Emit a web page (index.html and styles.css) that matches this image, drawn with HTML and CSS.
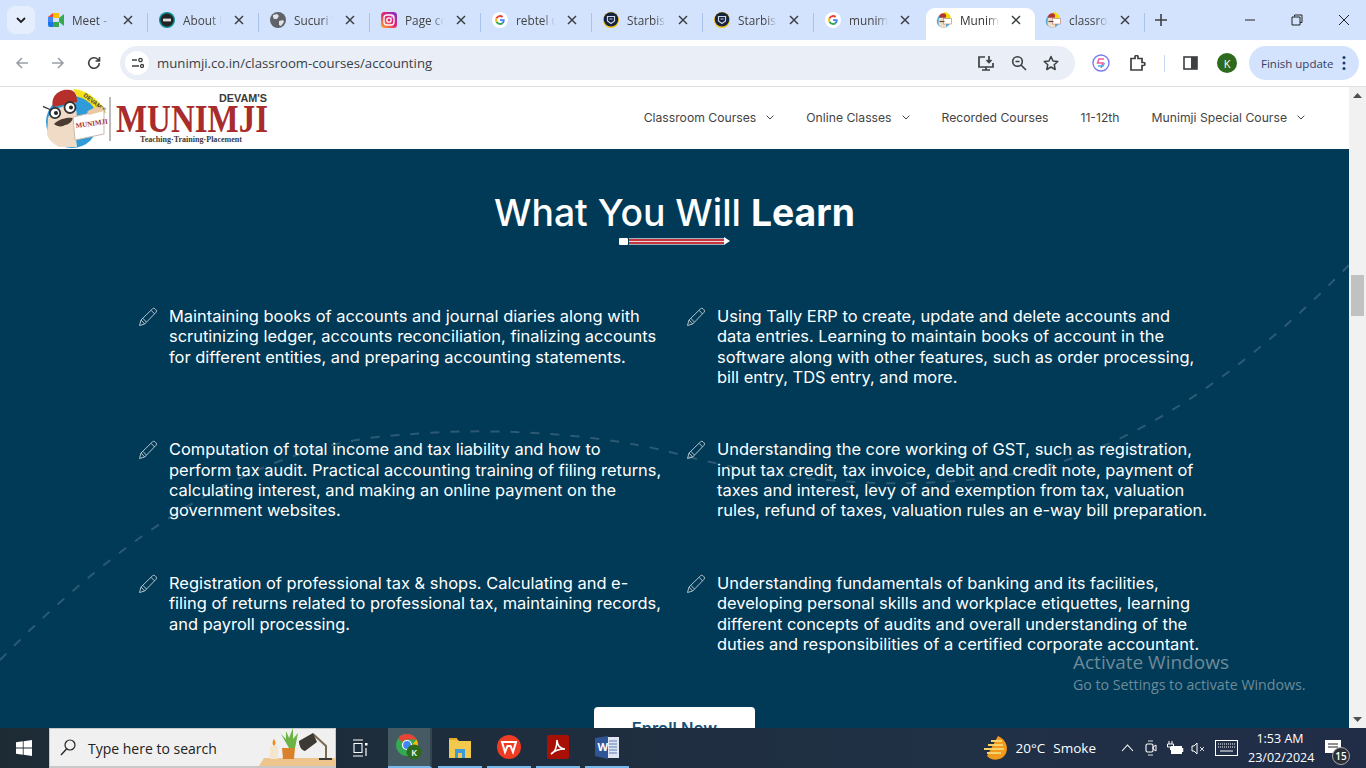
FILE: index.html
```html
<!DOCTYPE html>
<html lang="en">
<head>
<meta charset="utf-8">
<title>Munimji</title>
<link rel="stylesheet" href="styles.css">
</head>
<body>
<svg class="defs" width="0" height="0" aria-hidden="true">
  <defs>
    <linearGradient id="ig" x1="0" y1="1" x2="1" y2="0"><stop offset="0" stop-color="#fdb32a"/><stop offset=".5" stop-color="#e8256f"/><stop offset="1" stop-color="#7b2fd6"/></linearGradient>
    <symbol id="f-meet" viewBox="0 0 16 16"><path d="M0 5 5 1h6v5H5v4H0z" fill="#ea4335"/><path d="M0 5h5v5H0z" fill="#4285f4"/><path d="M0 10h5v5H2a2 2 0 0 1-2-2z" fill="#1a73e8"/><path d="M5 10h6v5H5z" fill="#34a853"/><path d="M5 1h6v5H5z" fill="#fbbc04"/><path d="M11 6 16 2v12l-5-4z" fill="#34a853"/></symbol>
    <symbol id="f-ms" viewBox="0 0 16 16"><circle cx="8" cy="8" r="8" fill="#0d8a8f"/><circle cx="8" cy="8" r="6.500" fill="#222"/><rect x="4" y="6.600" width="8" height="2.800" fill="#ddd"/></symbol>
    <symbol id="f-globe" viewBox="0 0 16 16"><circle cx="8" cy="8" r="8" fill="#5f6368"/><path d="M3 3 7 2 9 4 7 7 4 7 3 5zM9 9l4-1 1 2-3 4-2-1z" fill="#dfe3e8"/></symbol>
    <symbol id="f-ig" viewBox="0 0 16 16"><rect width="16" height="16" rx="3.500" fill="url(#ig)"/><rect x="3" y="3" width="10" height="10" rx="3" fill="none" stroke="#fff" stroke-width="1.300"/><circle cx="8" cy="8" r="2.200" fill="none" stroke="#fff" stroke-width="1.300"/><circle cx="11" cy="5" r=".8" fill="#fff"/></symbol>
    <symbol id="f-g" viewBox="0 0 16 16"><circle cx="8" cy="8" r="8" fill="#fff"/><path d="M12.700 8.200c0-.4 0-.7-.1-1H8v1.900h2.700a2.300 2.300 0 0 1-1 1.500l1.500 1.200c.9-.9 1.500-2.100 1.500-3.600z" fill="#4285f4"/><path d="M8 13c1.300 0 2.400-.4 3.200-1.200l-1.500-1.200c-.4.3-1 .5-1.700.5-1.300 0-2.400-.9-2.800-2L3.600 10.300A5 5 0 0 0 8 13z" fill="#34a853"/><path d="M5.200 9.100a3 3 0 0 1 0-2L3.600 5.800a5 5 0 0 0 0 4.500z" fill="#fbbc05"/><path d="M8 5c.7 0 1.400.3 1.900.7l1.400-1.400A5 5 0 0 0 3.600 5.800l1.600 1.300C5.600 5.900 6.700 5 8 5z" fill="#ea4335"/></symbol>
    <symbol id="f-star" viewBox="0 0 16 16"><circle cx="8" cy="8" r="8" fill="#f2c012"/><circle cx="8" cy="7.400" r="7.200" fill="#14233f"/><path d="M4.500 4.500h7V9L8 11.500 4.500 9z" fill="none" stroke="#cfd6e2" stroke-width="1.200"/><path d="M6.500 7h3" stroke="#cfd6e2"/></symbol>
    <symbol id="f-mun" viewBox="0 0 16 16"><circle cx="7.500" cy="9" r="6.800" fill="#58a9dc"/><path d="M8 0a8 8 0 0 1 7 6L9 7z" fill="#f5d90a"/><path d="M3 5C3 1 9 0 10 3v2.500H3z" fill="#b8322e"/><path d="M3 6h7v9.500H6C4 15 2.500 13 2.500 11z" fill="#f1dcc4"/><rect x="7.500" y="6.500" width="8" height="5.500" fill="#fff" stroke="#c27a76" stroke-width=".6"/><path d="M3.500 9.500h5" stroke="#5a4a40" stroke-width="1.200"/></symbol>
    <symbol id="x" viewBox="0 0 10 10"><path d="M1 1l8 8M9 1 1 9" fill="none" stroke="#3c4043" stroke-width="1.500"/></symbol>
    <symbol id="pen" viewBox="0 0 20 20"><path d="M1.500 18.500 3 13 14.500 1.800a1.800 1.800 0 0 1 2.500 0l1 1a1.800 1.800 0 0 1 0 2.500L6.700 17zM3 13l3.700 4M13 3.300l3.700 3.700M4.800 11.300l3.600 3.700" fill="none" stroke="#b4c2ca" stroke-width="1" stroke-linejoin="round"/></symbol>
    <symbol id="chev" viewBox="0 0 8 5"><path d="M.7.7 4 4 7.300.7" fill="none" stroke="#444" stroke-width="1"/></symbol>
  </defs>
</svg>

<header class="tabstrip">
  <button class="tab-menu"><svg width="10" height="7" viewBox="0 0 10 7"><path d="M1 1l4 4 4-4" fill="none" stroke="#1f1f1f" stroke-width="1.800"/></svg></button>
  <div class="tab"><svg class="fav"><use href="#f-meet"/></svg><span class="tab-label">Meet - Google</span><svg class="tab-x"><use href="#x"/></svg></div>
  <div class="tab"><svg class="fav"><use href="#f-ms"/></svg><span class="tab-label">About Us</span><svg class="tab-x"><use href="#x"/></svg></div>
  <div class="tab"><svg class="fav"><use href="#f-globe"/></svg><span class="tab-label">Sucuri Web</span><svg class="tab-x"><use href="#x"/></svg></div>
  <div class="tab"><svg class="fav"><use href="#f-ig"/></svg><span class="tab-label">Page could</span><svg class="tab-x"><use href="#x"/></svg></div>
  <div class="tab"><svg class="fav"><use href="#f-g"/></svg><span class="tab-label">rebtel uses</span><svg class="tab-x"><use href="#x"/></svg></div>
  <div class="tab"><svg class="fav"><use href="#f-star"/></svg><span class="tab-label">Starbis -</span><svg class="tab-x"><use href="#x"/></svg></div>
  <div class="tab"><svg class="fav"><use href="#f-star"/></svg><span class="tab-label">Starbis -</span><svg class="tab-x"><use href="#x"/></svg></div>
  <div class="tab tab-before-active"><svg class="fav"><use href="#f-g"/></svg><span class="tab-label">munimji</span><svg class="tab-x"><use href="#x"/></svg></div>
  <div class="tab tab-active"><svg class="fav"><use href="#f-mun"/></svg><span class="tab-label">Munimji</span><svg class="tab-x"><use href="#x"/></svg></div>
  <div class="tab"><svg class="fav"><use href="#f-mun"/></svg><span class="tab-label">classroom</span><svg class="tab-x"><use href="#x"/></svg></div>
  <svg class="new-tab" width="12" height="12" viewBox="0 0 12 12"><path d="M6 0v12M0 6h12" stroke="#3c4043" stroke-width="1.600"/></svg>
  <div class="win-controls">
    <svg width="12" height="12" viewBox="0 0 12 12"><path d="M1 6h10" stroke="#222" stroke-width="1"/></svg>
    <svg width="12" height="12" viewBox="0 0 12 12"><path d="M3.500 2.500V1h7.500v7.500H9M1 3h8v8H1z" fill="none" stroke="#222" stroke-width="1"/></svg>
    <svg width="12" height="12" viewBox="0 0 12 12"><path d="M1 1l10 10M11 1 1 11" stroke="#222" stroke-width="1"/></svg>
  </div>
</header>

<nav class="toolbar">
  <svg class="tool" width="14" height="14" viewBox="0 0 14 14"><path d="M13 7H2M7 2 2 7l5 5" fill="none" stroke="#9aa0a6" stroke-width="1.600"/></svg>
  <svg class="tool" width="14" height="14" viewBox="0 0 14 14"><path d="M1 7h11M7 2l5 5-5 5" fill="none" stroke="#9aa0a6" stroke-width="1.600"/></svg>
  <svg class="tool" width="14" height="14" viewBox="0 0 14 14"><path d="M12.300 7A5.300 5.300 0 1 1 10.700 3.200L12.500 5M12.500 1v4h-4" fill="none" stroke="#3c4043" stroke-width="1.600"/></svg>
  <div class="omnibox">
    <span class="tune"><svg width="13" height="12" viewBox="0 0 13 12"><path d="M1 3h5M1 9h7" stroke="#3c4043" stroke-width="1.400"/><circle cx="9.500" cy="3" r="1.700" fill="none" stroke="#3c4043" stroke-width="1.300"/><circle cx="11" cy="9" r="1.500" fill="none" stroke="#3c4043" stroke-width="1.300"/></svg></span>
    <span class="url">munimji.co.in/classroom-courses/accounting</span>
    <div class="omni-icons">
      <svg width="18" height="17" viewBox="0 0 18 17"><path d="M8 2H2v10h14V8M5 15h8M9 12v3M12 1v6M9.500 5 12 7.500 14.500 5" fill="none" stroke="#3c4043" stroke-width="1.700"/></svg>
      <svg width="16" height="16" viewBox="0 0 16 16"><circle cx="6.500" cy="6.500" r="4.800" fill="none" stroke="#3c4043" stroke-width="1.600"/><path d="M10 10l5 5M4.500 6.500h4" stroke="#3c4043" stroke-width="1.600"/></svg>
      <svg width="16" height="16" viewBox="0 0 16 16"><path d="m8 1.500 2 4.500 4.800.5-3.600 3.200 1 4.800L8 12l-4.200 2.500 1-4.800L1.200 6.500 6 6z" fill="none" stroke="#3c4043" stroke-width="1.500" stroke-linejoin="round"/></svg>
    </div>
  </div>
  <svg class="ext-swirl" width="18" height="18" viewBox="0 0 18 18"><circle cx="9" cy="9" r="8" fill="#fff" stroke="#7b7bf0" stroke-width="1.400"/><path d="M12 5H7L5.500 9H11L9 14" fill="none" stroke="#f0609a" stroke-width="1.500"/><path d="M6 12h5l1.500-3" fill="none" stroke="#39b6e8" stroke-width="1.300"/></svg>
  <svg class="ext-puzzle" width="17" height="17" viewBox="0 0 17 17"><path d="M2 3.500h4V2a1.500 1.500 0 0 1 3 0v1.500h4v4h1.500a1.500 1.500 0 0 1 0 3H13v4.500H2z" fill="none" stroke="#3c4043" stroke-width="1.700"/></svg>
  <span class="tool-div"></span>
  <svg class="side-panel" width="15" height="14" viewBox="0 0 15 14"><rect x="1" y="1" width="13" height="12" fill="none" stroke="#3c4043" stroke-width="1.600"/><rect x="8" y="1" width="6" height="12" fill="#3c4043"/></svg>
  <span class="avatar">K</span>
  <div class="update-pill"><span>Finish update</span><svg width="4" height="16" viewBox="0 0 4 16"><circle cx="2" cy="2.500" r="1.500" fill="#1f3b66"/><circle cx="2" cy="8" r="1.500" fill="#1f3b66"/><circle cx="2" cy="13.500" r="1.500" fill="#1f3b66"/></svg></div>
</nav>

<div class="viewport">
  <main class="page">
    <div class="site-nav">
      <a class="logo" href="#">
        <svg width="228" height="62" viewBox="0 0 228 62">
          <path d="M30 2c14 1 28 12 33 24L46 30z" fill="#f6e21a"/>
          <text x="40" y="9" class="logo-tiny" transform="rotate(38 40 9)">DEVAM'S</text>
          <circle cx="29" cy="35" r="26" fill="#2f9bd8"/>
          <path d="M5 31l3-7 24-9 2 14-2 14 2 17H16C10 57 6 53 4 48z" fill="#f0dcc6"/>
          <path d="M10 20C7 8 18 1 27 3c6 1 7 6 7 12z" fill="#b5302b"/>
          <circle cx="12" cy="26" r="5.200" fill="#fff" stroke="#333" stroke-width="1.800"/>
          <circle cx="27" cy="20.500" r="5.500" fill="#fff" stroke="#333" stroke-width="1.800"/>
          <circle cx="13" cy="26" r="2" fill="#222"/><circle cx="28" cy="20.500" r="2" fill="#222"/>
          <path d="M11 37c5-5 13-7 19-6-1 4-5 7-8 7-2 2-8 2-11-1z" fill="#4a3b32"/>
          <path d="M-1 19l9 4" stroke="#333" stroke-width="1.300"/>
          <path d="M30 30l31-7 0 24-29 6z" fill="#fff" stroke="#c9b9b0"/>
          <text x="33" y="41" class="logo-card" transform="rotate(-8 33 41)">MUNIMJI</text>
          <path d="M44 25c3-3 11-6 15-4l2 3-15 4z" fill="#eac8a6"/>
          <path d="M67 10v44" stroke="#777" stroke-width="1"/>
          <text x="176" y="15" class="logo-devam" textLength="48" lengthAdjust="spacingAndGlyphs">DEVAM'S</text>
          <text x="73" y="45" class="logo-word" textLength="152" lengthAdjust="spacingAndGlyphs">MUNIMJI</text>
          <text x="97" y="55" class="logo-tag" textLength="102" lengthAdjust="spacingAndGlyphs">Teaching·Training·Placement</text>
        </svg>
      </a>
      <ul class="menu">
        <li>Classroom Courses<svg class="chev"><use href="#chev"/></svg></li>
        <li>Online Classes<svg class="chev"><use href="#chev"/></svg></li>
        <li>Recorded Courses</li>
        <li>11-12th</li>
        <li>Munimji Special Course<svg class="chev"><use href="#chev"/></svg></li>
      </ul>
    </div>

    <section class="learn">
      <svg class="wave" width="1349" height="641" viewBox="0 0 1349 641" aria-hidden="true">
        <path d="M0 573C110 460 250 355 402 348 480 340 590 345 670 365 780 395 900 405 1007 388 1130 368 1250 280 1349 178" fill="none" stroke="#2c5a73" stroke-width="2" stroke-dasharray="9 11"/>
      </svg>
      <h2 class="learn-title">What You Will <strong>Learn</strong></h2>
      <div class="pencil">
        <span class="pencil-eraser"></span>
        <span class="pencil-body"></span>
        <span class="pencil-tip"></span>
      </div>
      <div class="learn-grid">
        <div class="item"><svg class="pen"><use href="#pen"/></svg><p>Maintaining books of accounts and journal diaries along with scrutinizing ledger, accounts reconciliation, finalizing accounts for different entities, and preparing accounting statements.</p></div>
        <div class="item"><svg class="pen"><use href="#pen"/></svg><p>Using Tally ERP to create, update and delete accounts and<br>data entries. Learning to maintain books of account in the software along with other features, such as order processing, bill entry, TDS entry, and more.</p></div>
        <div class="item"><svg class="pen"><use href="#pen"/></svg><p>Computation of total income and tax liability and how to perform tax audit. Practical accounting training of filing returns, calculating interest, and making an online payment on the government websites.</p></div>
        <div class="item"><svg class="pen"><use href="#pen"/></svg><p>Understanding the core working of GST, such as registration, input tax credit, tax invoice, debit and credit note, payment of taxes and interest, levy of and exemption from tax, valuation rules, refund of taxes, valuation rules an e-way bill preparation.</p></div>
        <div class="item"><svg class="pen"><use href="#pen"/></svg><p>Registration of professional tax &amp; shops. Calculating and e-filing of returns related to professional tax, maintaining records, and payroll processing.</p></div>
        <div class="item"><svg class="pen"><use href="#pen"/></svg><p>Understanding fundamentals of banking and its facilities, developing personal skills and workplace etiquettes, learning different concepts of audits and overall understanding of the duties and responsibilities of a certified corporate accountant.</p></div>
      </div>
      <a class="enroll" href="#">Enroll Now</a>
    </section>
  </main>
  <aside class="scrollbar">
    <svg width="9" height="5" viewBox="0 0 9 5"><path d="M4.500 0 9 5H0z" fill="#505050"/></svg>
    <span class="thumb"></span>
    <svg width="9" height="5" viewBox="0 0 9 5"><path d="M0 0h9L4.500 5z" fill="#505050"/></svg>
  </aside>
  <div class="activate">
    <div class="activate-title">Activate Windows</div>
    <div class="activate-sub">Go to Settings to activate Windows.</div>
  </div>
</div>

<footer class="taskbar">
  <svg class="start" width="16" height="16" viewBox="0 0 16 16"><path d="M0 2.300 6.800 1.300V7.600H0zM7.600 1.200 16 0V7.600H7.600zM0 8.400H6.800V14.700L0 13.700zM7.600 8.400H16V16L7.600 14.800z" fill="#fff"/></svg>
  <div class="search">
    <svg width="16" height="17" viewBox="0 0 16 17"><circle cx="10" cy="6" r="5" fill="none" stroke="#222" stroke-width="1.200"/><path d="M6.500 10 1 16" stroke="#222" stroke-width="1.300"/></svg>
    <span>Type here to search</span>
    <svg class="search-art" width="76" height="38" viewBox="0 0 76 38">
      <path d="M0 38l5-8h71v8z" fill="#eec58c"/>
      <rect x="11" y="18" width="8" height="13" rx="1" fill="#f3e6cf"/><path d="M15 11c2 3 2 5 0 7-2-2-2-4 0-7z" fill="#f08a1d"/>
      <path d="M23 20h13l-1 11H24z" fill="#d9822b"/>
      <path d="M30 20 22 6l5 5 0-8 3 7 4-10 0 11 5-6-3 15z" fill="#6ab344"/>
      <path d="M54 6l13 12v12" fill="none" stroke="#7a6a4e" stroke-width="2"/>
      <path d="M60 30h13v2H60z" fill="#3d3a34"/>
      <path d="M40 13l14-8 4 9-12 9c-4-1-6-5-6-10z" fill="#3d3a34"/>
    </svg>
  </div>
  <svg class="taskview" width="16" height="18" viewBox="0 0 16 18"><path d="M1 1h10M1 17h10M2 4.500h8v9H2z" fill="none" stroke="#fff" stroke-width="1.100"/><rect x="13" y="4" width="2.500" height="2.500" fill="#fff"/><path d="M14 9v8" stroke="#fff" stroke-width="1.200"/></svg>
  <div class="task-cell task-chrome">
    <svg width="26" height="26" viewBox="0 0 26 26"><circle cx="11" cy="11" r="11" fill="#34a853"/><path d="M11 0a11 11 0 0 1 9.500 5.500H11A5.500 5.500 0 0 0 6 8.500L2.300 4A11 11 0 0 1 11 0z" fill="#ea4335"/><path d="M20.500 5.500A11 11 0 0 1 11 22l4-7a5 5 0 0 0 1-4z" fill="#fbbc05"/><circle cx="11" cy="11" r="4.500" fill="#4285f4" stroke="#fff" stroke-width="1.200"/><circle cx="18" cy="18" r="7.500" fill="#2d6a1e"/><text x="18" y="21.500" class="chrome-k">K</text></svg>
  </div>
  <div class="task-cell">
    <svg width="22" height="21" viewBox="0 0 22 21"><path d="M0 2h8l2 2h12v17H0z" fill="#f2c94c"/><path d="M0 1h8v2H0z" fill="#e3a92f"/><path d="M6 12h10v9h-3v-5H9v5H6z" fill="#3c9ad8"/></svg>
  </div>
  <div class="task-cell">
    <svg width="24" height="24" viewBox="0 0 24 24"><circle cx="12" cy="12" r="12" fill="#ed3c24"/><path d="M5 7h14l-3 10-2.500-6h-3L8 17z" fill="none" stroke="#fff" stroke-width="2"/></svg>
  </div>
  <div class="task-cell">
    <svg width="22" height="24" viewBox="0 0 22 24"><rect width="22" height="24" rx="2" fill="#a80f05"/><path d="M4 19c4-2 6-8 6-14 0 5 3 9 8 9-5 0-10 1-14 5z" fill="none" stroke="#fff" stroke-width="1.600"/></svg>
  </div>
  <div class="task-cell">
    <svg width="24" height="24" viewBox="0 0 24 24"><path d="M9 2h15v21H9z" fill="#dfe6f2"/><path d="M14 6h8M14 9h8M14 12h8M14 15h8M14 18h8" stroke="#5b7fb5"/><path d="M0 3 13 1v23L0 21z" fill="#2f5597"/><text x="2.500" y="16" class="word-w">W</text></svg>
  </div>
  <div class="tray">
    <svg class="weather" width="26" height="26" viewBox="0 0 26 26"><path d="M15 1c9 4 11 13 7 19-4 6-14 6-18 1z" fill="#f19a1e"/><path d="M8 6h11M5 10h15M1 14h20M4 18h14" stroke="#f6d26b" stroke-width="2"/></svg>
    <span class="temp">20°C</span><span class="cond">Smoke</span>
    <svg class="tray-chev" width="13" height="8" viewBox="0 0 13 8"><path d="M1 7l5.500-6L12 7" fill="none" stroke="#fff" stroke-width="1.100"/></svg>
    <svg class="tray-meet" width="12" height="16" viewBox="0 0 12 16"><path d="M3 1h5M3 15h5" stroke="#ddd"/><rect x="1" y="4" width="7" height="8" rx="1.500" fill="none" stroke="#fff" stroke-width="1.100"/><path d="M8 7l3-2v6L8 9z" fill="none" stroke="#fff"/></svg>
    <svg class="tray-batt" width="18" height="15" viewBox="0 0 18 15"><path d="M3 0v3M6 0v3M1.500 3h6v3h-6zM4.500 6v3" stroke="#fff" fill="none"/><rect x="5" y="5" width="11" height="8" fill="#fff"/><path d="M16.500 7v4" stroke="#fff" stroke-width="1.500"/></svg>
    <svg class="tray-vol" width="14" height="15" viewBox="0 0 14 15"><path d="M1 5h2l3-3v11l-3-3H1z" fill="none" stroke="#fff"/><path d="M9 6l4 4M13 6l-4 4" stroke="#ddd"/></svg>
    <svg class="tray-kb" width="23" height="16" viewBox="0 0 23 16"><rect x=".5" y=".5" width="22" height="15" fill="none" stroke="#fff"/><path d="M3 4h17M3 7h17" stroke="#fff" stroke-dasharray="1 1"/><path d="M5 11h13" stroke="#fff"/></svg>
    <div class="clock"><div>1:53 AM</div><div>23/02/2024</div></div>
    <div class="notif">
      <svg width="16" height="16" viewBox="0 0 16 16"><path d="M0 0h16v13H0z" fill="#fff"/><path d="M3 4h10M3 7h10" stroke="#222"/></svg>
      <span class="notif-badge">15</span>
    </div>
  </div>
</footer>
</body>
</html>
```
FILE: styles.css
```css
* { box-sizing: border-box; }
html, body { margin: 0; padding: 0; height: 100%; overflow: hidden; }
body { width: 1366px; height: 768px; display: flex; flex-direction: column; font-family: "Open Sans", "Liberation Sans", sans-serif; background: #fff; }
.defs { position: absolute; }

/* Browser tab strip */
.tabstrip { height: 40px; flex: none; background: #d3e3fd; display: flex; align-items: flex-end; padding-left: 7px; }
.tab-menu { width: 28px; height: 28px; margin: 0 3px 6px 0; border: 0; padding: 0; border-radius: 8px; background: #e4eefd; display: flex; align-items: center; justify-content: center; }
.tab { width: 111px; height: 32px; flex: none; display: flex; align-items: center; padding-left: 10px; position: relative; font-size: 11.800px; color: #444; }
.tab::after { content: ""; position: absolute; right: 1px; top: 5px; height: 19px; width: 1px; background: #a7c3ec; }
.tab-before-active::after, .tab-active::after { display: none; }
.tab-active { width: 109px; background: #fff; border-radius: 9px 9px 0 0; color: #333; }
.fav { width: 16px; height: 16px; flex: none; margin-top: -8px; }
.tab-label { width: 39px; margin-left: 8px; white-space: nowrap; overflow: hidden; margin-top: -8px; -webkit-mask-image: linear-gradient(90deg, #000 70%, transparent); mask-image: linear-gradient(90deg, #000 70%, transparent); }
.tab-x { width: 10px; height: 10px; margin-left: 12px; margin-top: -8px; flex: none; }
.new-tab { margin: 0 0 14px 9px; flex: none; }
.win-controls { display: flex; margin: 0 0 14px 77px; gap: 35px; }

/* Browser toolbar */
.toolbar { height: 47px; flex: none; background: #fff; border-bottom: 1px solid #dfe1e5; display: flex; align-items: center; padding: 0 7px 0 15px; }
.tool { flex: none; margin-right: 22px; }
.omnibox { width: 955px; height: 34px; margin-left: -3px; border-radius: 17px; background: #e9eef7; display: flex; align-items: center; padding: 0 16px 0 5px; }
.tune { width: 24px; height: 24px; border-radius: 50%; background: #fff; display: flex; align-items: center; justify-content: center; flex: none; }
.url { margin-left: 8px; font-family: "Open Sans", sans-serif; font-size: 13.200px; color: #3a3f45; white-space: nowrap; }
.omni-icons { margin-left: auto; display: flex; align-items: center; gap: 16px; }
.ext-swirl { margin-left: 17px; flex: none; }
.ext-puzzle { margin-left: 19px; flex: none; }
.tool-div { width: 1px; height: 17px; background: #c7d9f4; margin-left: 18px; flex: none; }
.side-panel { margin-left: 18px; flex: none; }
.avatar { width: 20px; height: 20px; margin-left: 19px; border-radius: 50%; background: #2d6a1e; color: #fff; font-size: 11px; display: flex; align-items: center; justify-content: center; flex: none; }
.update-pill { width: 110px; height: 34px; margin-left: 12px; border-radius: 17px; background: #d3e3fd; display: flex; align-items: center; justify-content: space-between; padding: 0 13px 0 12px; font-size: 11.500px; color: #33415c; flex: none; }

/* Page viewport */
.viewport { height: 641px; flex: none; display: flex; position: relative; overflow: hidden; }
.page { width: 1349px; flex: none; display: flex; flex-direction: column; font-family: Inter, "Liberation Sans", sans-serif; }
.site-nav { height: 62px; flex: none; background: #fff; display: flex; align-items: center; justify-content: space-between; padding: 0 44px 0 43px; }
.logo { display: block; height: 62px; }
.logo-tiny { font: 700 6px "Liberation Sans", sans-serif; fill: #444; }
.logo-card { font: 700 7px "Liberation Serif", serif; fill: #a82c2c; }
.logo-devam { font: 700 11px "Liberation Sans", sans-serif; fill: #3a3a3a; }
.logo-word { font: 700 41px "Liberation Serif", serif; fill: #a82c2c; }
.logo-tag { font: 700 7.500px "Liberation Serif", serif; fill: #3a3a3a; }
.menu { list-style: none; margin: 0 0 2px; padding: 0; display: flex; gap: 32px; font-size: 12.200px; color: #444; }
.menu li { display: flex; align-items: center; white-space: nowrap; }
.chev { width: 8px; height: 5px; margin-left: 10px; }

.learn { flex: 1; min-height: 0; background: #003a57; position: relative; display: flex; flex-direction: column; align-items: center; color: #fff; }
.wave { position: absolute; left: 0; top: -62px; }
.learn-title { position: relative; margin: 38px 0 0; font-size: 37.300px; line-height: 52px; font-weight: 500; }
.learn-title strong { font-weight: 700; }
.pencil { position: relative; height: 8px; margin-top: -2px; display: flex; align-items: center; }
.pencil-eraser { width: 9px; height: 7px; background: #fff; border-radius: 1px; }
.pencil-body { width: 95px; height: 7px; margin-left: 1px; background: linear-gradient(#9fb3bf 0 1px, #c8343b 1px 3px, #e9d7d8 3px 4px, #c8343b 4px 6px, #9fb3bf 6px); }
.pencil-tip { width: 0; height: 0; border-left: 6px solid #fff; border-top: 4px solid transparent; border-bottom: 4px solid transparent; }
.learn-grid { position: relative; align-self: flex-start; margin: 61px 0 0 138px; width: 1096px; display: grid; grid-template-columns: 548px 548px; row-gap: 52.300px; }
.item { display: flex; align-items: flex-start; }
.item p { width: 496px; margin: 0 0 0 11px; font-size: 16.450px; line-height: 20.300px; }
.pen { width: 20px; height: 20px; flex: none; margin-top: 1px; }
.enroll { position: relative; margin-top: 53px; width: 161px; height: 50px; flex: none; background: #fff; border-radius: 4px; color: #1a5276; font-weight: 600; font-size: 16.500px; text-align: center; line-height: 42px; text-decoration: none; }

/* Scrollbar */
.scrollbar { width: 17px; flex: none; background: #f1f1f1; display: flex; flex-direction: column; align-items: center; padding: 6px 0 6px; position: relative; }
.scrollbar svg:last-child { margin-top: auto; }
.thumb { position: absolute; left: 2px; top: 188px; width: 13px; height: 41px; background: #c1c1c1; }

/* Activation watermark */
.activate { position: absolute; left: 1073px; top: 565px; color: #6d8a99; pointer-events: none; }
.activate-title { font-size: 19px; line-height: 20px; }
.activate-sub { font-size: 14.200px; line-height: 26px; }

/* Windows taskbar */
.taskbar { height: 40px; flex: none; display: flex; align-items: center; background: linear-gradient(90deg, #1d2b35, #203045 70%, #212d47); color: #fff; padding-left: 16px; }
.start { flex: none; }
.search { width: 287px; height: 40px; margin-left: 17px; background: #f0f0f0; border: 1px solid #c8c8c8; border-width: 1px 1px 2px; display: flex; align-items: center; padding-left: 10px; color: #222; font-size: 14px; flex: none; position: relative; }
.search span { margin: 2px 0 0 12px; }
.search-art { position: absolute; right: 0; bottom: 0; }
.taskview { margin: 0 20px 0 16px; flex: none; }
.task-cell { width: 44px; height: 40px; margin-right: 5px; flex: none; display: flex; align-items: center; justify-content: center; border-bottom: 2px solid #76b9ed; }
.task-chrome { margin-right: 6px; background: #465a63; border-right: 2px solid #33454f; }
.chrome-k { font-size: 9px; font-weight: 600; fill: #fff; text-anchor: middle; }
.word-w { font-size: 11px; font-weight: 700; fill: #fff; }
.tray { margin-left: auto; display: flex; align-items: center; height: 40px; font-size: 13.500px; flex: none; }
.weather { flex: none; }
.temp { margin-left: 7px; }
.cond { margin-left: 8px; }
.tray-chev { margin-left: 25px; }
.tray-meet { margin-left: 11px; }
.tray-batt { margin-left: 9px; }
.tray-vol { margin-left: 7px; }
.tray-kb { margin-left: 10px; }
.clock { width: 64px; margin-left: 10px; text-align: center; font-size: 12.500px; line-height: 19px; }
.notif { width: 30px; margin: 0 18px 0 6px; height: 40px; display: flex; align-items: center; justify-content: center; position: relative; }
.notif-badge { position: absolute; left: 14px; top: 19px; width: 18px; height: 18px; border-radius: 50%; background: #2a2f36; border: 1px solid #aaa; font-size: 10px; line-height: 16px; text-align: center; font-weight: 600; }
```
